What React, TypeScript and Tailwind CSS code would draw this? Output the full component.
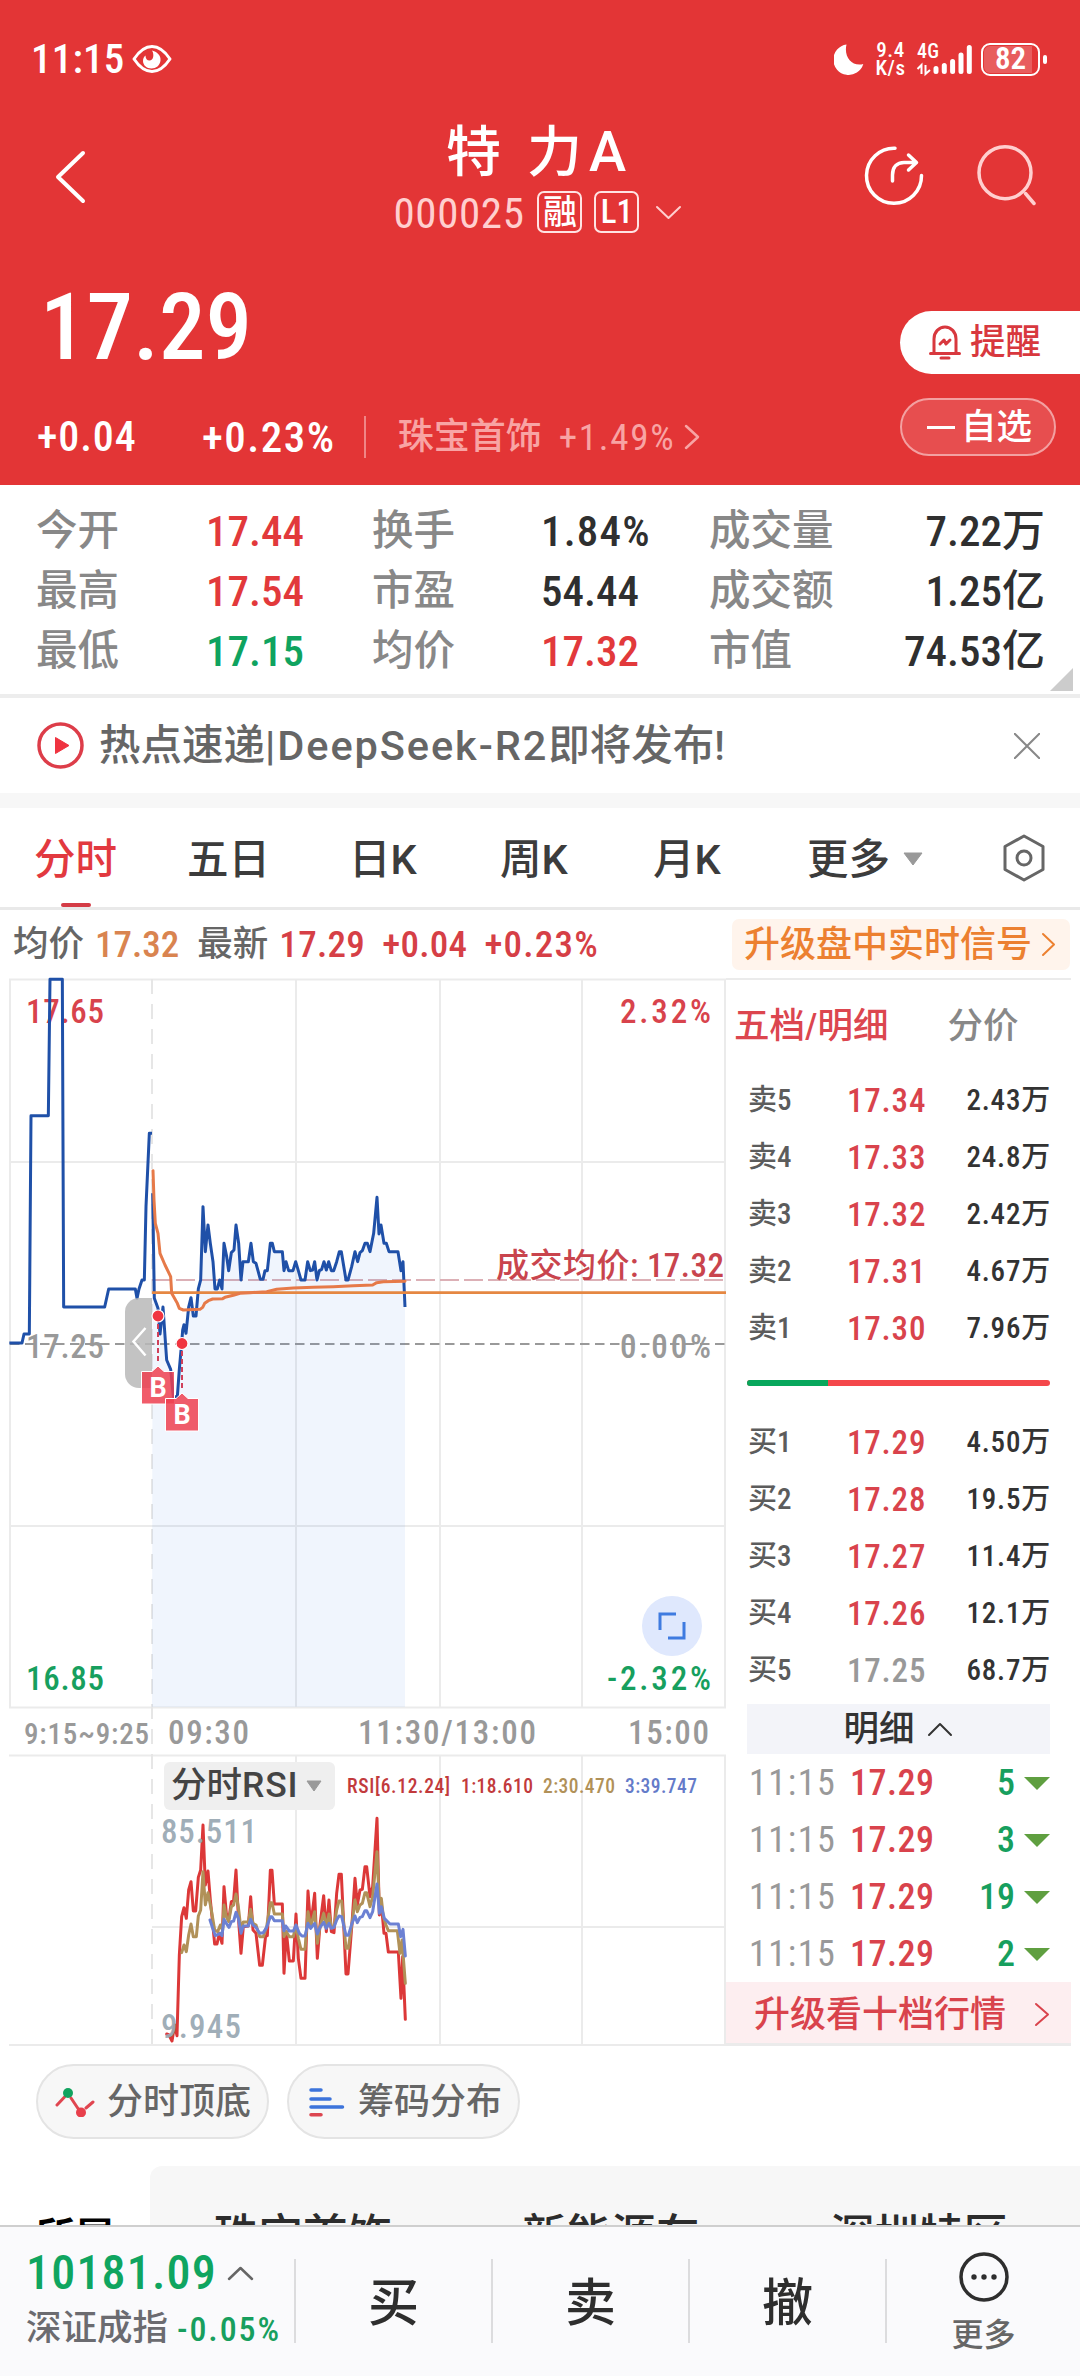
import { clsx } from "clsx";

type Quote = { label: string; price: string; volume: string; flat?: boolean };

const stats = [
  { label: "今开", value: "17.44", color: "text-[#e2393b]" },
  { label: "换手", value: "1.84%", color: "text-[#2f2f2f]" },
  { label: "成交量", value: "7.22万", color: "text-[#2f2f2f]" },
  { label: "最高", value: "17.54", color: "text-[#e2393b]" },
  { label: "市盈", value: "54.44", color: "text-[#2f2f2f]" },
  { label: "成交额", value: "1.25亿", color: "text-[#2f2f2f]" },
  { label: "最低", value: "17.15", color: "text-[#0fa35f]" },
  { label: "均价", value: "17.32", color: "text-[#e2393b]" },
  { label: "市值", value: "74.53亿", color: "text-[#2f2f2f]" },
];

const asks: Quote[] = [
  { label: "卖5", price: "17.34", volume: "2.43万" },
  { label: "卖4", price: "17.33", volume: "24.8万" },
  { label: "卖3", price: "17.32", volume: "2.42万" },
  { label: "卖2", price: "17.31", volume: "4.67万" },
  { label: "卖1", price: "17.30", volume: "7.96万" },
];

const bids: Quote[] = [
  { label: "买1", price: "17.29", volume: "4.50万" },
  { label: "买2", price: "17.28", volume: "19.5万" },
  { label: "买3", price: "17.27", volume: "11.4万" },
  { label: "买4", price: "17.26", volume: "12.1万" },
  { label: "买5", price: "17.25", volume: "68.7万", flat: true },
];

const trades = [
  { time: "11:15", price: "17.29", count: 5 },
  { time: "11:15", price: "17.29", count: 3 },
  { time: "11:15", price: "17.29", count: 19 },
  { time: "11:15", price: "17.29", count: 2 },
];

// Chart series, in thirds of a pixel
const auctionLine =
  "28,1149 66,1149 72,1122 88,1122 93,467 145,467 150,58 187,58 191,1041 314,1041 326,987 406,987 411,1015 417,987 426,960 433,960 438,740 448,520 456,520";
const priceLine =
  "458,700 463,1015 474,1045 480,1122 489,1041 500,1200 512,1228 520,1310 532,1310 538,1228 545,1149 548,1110 552,1094 558,1120 566,1041 573,1013 580,1068 588,1068 595,987 602,960 609,740 616,875 624,795 631,850 639,905 645,987 652,987 659,960 666,987 672,850 680,890 686,932 694,878 702,870 708,795 716,850 723,960 729,905 745,905 753,850 760,905 768,910 781,958 789,958 795,932 802,932 811,850 817,850 823,875 847,875 852,932 858,905 866,932 879,932 887,905 895,932 903,960 915,960 923,905 931,932 938,930 944,905 951,960 958,932 965,928 972,905 979,930 986,905 994,932 1001,932 1010,905 1018,875 1024,875 1038,960 1044,960 1055,920 1065,875 1073,905 1080,878 1087,872 1095,850 1102,850 1110,875 1121,820 1131,712 1137,822 1143,795 1152,850 1159,850 1167,875 1194,875 1203,932 1209,905 1215,1041";
const averageLine =
  "459,632 462,720 466,790 474,820 480,880 495,915 512,950 515,1000 532,1030 538,1045 550,1050 600,1048 608,1042 614,1030 625,1022 638,1017 668,1016 675,1012 700,1006 720,1000 750,998 800,995 830,988 880,984 940,982 1000,980 1060,977 1118,975 1130,968 1150,965 1215,964";
const rsi6 =
  "50,732 57,735 66,753 74,705 81,737 88,495 95,380 102,353 109,385 116,300 123,275 130,363 137,363 145,262 152,240 159,105 166,285 174,243 181,330 188,400 194,462 201,462 208,430 216,460 222,290 229,370 237,385 244,335 251,330 258,240 265,380 273,490 280,410 295,408 302,320 309,420 318,430 329,526 337,526 347,437 352,437 361,241 366,241 373,342 397,342 402,550 409,425 418,513 430,513 438,372 445,505 453,565 465,565 474,303 482,410 494,310 502,505 510,405 521,317 529,425 537,330 544,425 552,428 560,310 567,253 574,253 588,552 594,552 606,400 615,265 622,345 630,300 637,298 645,230 650,230 660,320 668,290 681,85 688,375 694,340 702,430 708,430 715,486 745,486 753,625 758,500 766,688";
const rsi12 =
  "95,488 102,465 109,485 116,435 123,402 130,440 139,440 145,378 152,360 159,245 166,345 174,308 184,360 194,420 203,425 211,405 218,420 222,345 229,380 236,395 244,350 251,345 258,312 265,350 273,420 280,396 295,396 302,358 309,400 318,405 329,440 340,440 350,410 361,338 366,338 373,372 397,372 402,440 409,425 418,440 430,440 438,405 445,445 453,478 465,478 474,365 482,410 494,365 502,460 510,410 521,370 529,410 537,372 544,410 552,412 560,360 567,333 575,333 588,475 595,475 606,400 615,330 622,365 630,345 637,340 645,308 650,308 660,350 668,320 681,185 688,345 694,325 700,380 708,405 715,422 742,422 750,490 756,450 766,580";
const rsi24 =
  "180,390 188,415 196,437 211,430 216,437 222,388 229,400 237,412 244,395 251,393 258,367 265,385 273,430 280,408 295,408 302,388 309,405 318,412 329,430 340,428 350,412 361,380 366,380 373,392 397,392 402,422 407,408 418,423 430,423 438,405 448,430 456,438 465,438 474,400 482,415 494,400 502,432 510,412 521,397 529,415 537,400 544,415 552,412 560,390 567,378 575,380 588,436 595,436 606,400 615,378 622,398 630,382 637,380 645,362 650,362 660,383 668,365 681,282 688,370 694,350 703,385 720,402 745,402 752,440 759,418 766,498";

function Chevron({
  dir,
  w,
  h,
  className,
  stroke = 2.5,
}: {
  dir: "left" | "right" | "up" | "down";
  w: number;
  h: number;
  className?: string;
  stroke?: number;
}) {
  const points = {
    left: `${w},0 0,${h / 2} ${w},${h}`,
    right: `0,0 ${w},${h / 2} 0,${h}`,
    up: `0,${h} ${w / 2},0 ${w},${h}`,
    down: `0,0 ${w / 2},${h} ${w},0`,
  }[dir];
  return (
    <svg
      width={w}
      height={h}
      className={clsx("shrink-0 overflow-visible", className)}
      fill="none"
      stroke="currentColor"
      strokeWidth={stroke}
      strokeLinecap="round"
      strokeLinejoin="round"
    >
      <polyline points={points} />
    </svg>
  );
}

function StatusBar() {
  return (
    <div className="flex h-[118px] items-center pl-[31px] pr-[33px]">
      <span className="pt-[2px] text-[41px] tracking-[0.2px]">11:15</span>
      <svg width="40" height="30" viewBox="0 0 40 30" className="ml-[8px]">
        <path
          d="M2 15C8 6 14 2.500 20 2.500S32 6 38 15C32 24 26 27.500 20 27.500S8 24 2 15Z"
          fill="none"
          stroke="#fff"
          strokeWidth="3"
          strokeLinejoin="round"
        />
        <path d="M20 6.500C26 8 29 12 28.500 16.500C28 21.500 24 24.500 19.500 24.500C14.500 24.500 11 21 11 17C11 14.500 12 12.500 13.500 11.500C13.500 14.500 15 16.500 17.500 16.500C21.500 16.500 22.500 10.500 20 6.500Z" fill="#fff" />
      </svg>
      <div className="ml-auto flex items-center">
        <svg width="30" height="31" viewBox="0 0 30 31">
          <path d="M12.500 0.500A15.300 15.300 0 1 0 29.300 20C18 23 9.500 13 12.500 0.500Z" fill="#fff" />
        </svg>
        <div className="ml-[11px] w-[31px] text-center text-[21px] leading-[18px] tracking-[0.5px]">
          <div>9.4</div>
          <div>K/s</div>
        </div>
        <svg width="56" height="32" viewBox="0 0 56 32" className="ml-[11px] overflow-visible">
          <text x="0" y="15" fontSize="20" fill="#fff" textLength="22">4G</text>
          <path d="M0.500 26L4.500 22V31M8.500 22V31L13 27" fill="none" stroke="#fff" strokeWidth="2" />
          <path
            d="M19 25.500V28.500M27.300 22.500V28.500M35.600 18.500V28.500M44 12V28.500M52.300 4.500V28.500"
            stroke="#fff"
            strokeWidth="5"
            strokeLinecap="round"
          />
        </svg>
        <div className="ml-[8px] flex h-[33px] w-[59px] items-center rounded-[9px] border-2 border-white p-[1px]">
          <div className="flex h-full w-[48px] items-center justify-center rounded-l-[6px] bg-white/20 pl-[5px] text-[31px] font-semibold">
            82
          </div>
        </div>
        <div className="ml-[3px] h-[9px] w-[4px] rounded-full bg-white" />
      </div>
    </div>
  );
}

function Header() {
  return (
    <header className="h-[485px] bg-[#e33536] text-white">
      <StatusBar />
      <div className="grid h-[132px] grid-cols-[58px_239px_1fr_303px]">
        <Chevron dir="left" w={25} h={48} stroke={4} className="col-start-2 mt-[35px]" />
        <div className="flex flex-col items-center pt-[4px]">
          <div className="flex h-[60px] items-center pr-[2px] text-[55px] leading-none">
            <span>特</span>
            <span className="ml-[26px]">力</span>
            <span className="ml-[7px] text-[56px] font-stretch-normal">A</span>
          </div>
          <div className="flex h-[60px] items-center">
            <span className="pt-[2px] text-[43px] font-normal tracking-[0.6px] text-[#ffcfcf]">000025</span>
            <span className="-mt-[1px] ml-[13px] flex h-[42px] w-[45px] items-center justify-center rounded-[7px] border-2 border-[#ffe3e3] text-[34px] leading-none">
              融
            </span>
            <span className="-mt-[1px] ml-[12px] flex h-[42px] w-[45px] items-center justify-center rounded-[7px] border-2 border-[#ffe3e3] text-[33px] leading-none">
              L1
            </span>
            <Chevron dir="down" w={23} h={11} stroke={2} className="ml-[18px] text-[#ffcfcf]" />
          </div>
        </div>
        <div className="flex pl-[88px] pt-[26px]">
          <svg width="58" height="64" viewBox="865 144 58 64" fill="none" stroke="#fff" strokeWidth="3.500" strokeLinecap="round" strokeLinejoin="round" className="overflow-visible">
            <path d="M895 148.300A27.500 27.500 0 1 0 921.500 175.500" />
            <path d="M892.500 181V175C892.500 167 897 162.500 904 162.500H916M908.500 155L916.500 162.500L908.500 170" />
          </svg>
          <svg width="60" height="64" viewBox="976 144 60 64" fill="none" stroke="#ffcfcf" strokeWidth="3.500" strokeLinecap="round" className="ml-[53px]">
            <circle cx="1005" cy="172.700" r="26" />
            <path d="M1025.500 193.500L1034 203.500" />
          </svg>
        </div>
      </div>
      <div className="flex justify-between">
        <div className="pl-[37px]">
          <div className="flex h-[152px] items-center pl-[3px] pt-[3px] text-[93px] font-medium">17.29</div>
          <div className="flex h-[70px] items-center text-[42px] leading-none">
            <span className="w-[165px] tracking-[0.9px]">+0.04</span>
            <span className="text-[43px] tracking-[1.500px]">+0.23%</span>
            <span className="ml-[28px] h-[42px] w-[2px] bg-[#f08586]" />
            <div className="ml-[32px] flex items-center text-[#f8a4a4]">
              <span className="text-[36px]">珠宝首饰</span>
              <span className="ml-[17px] text-[37px] font-normal tracking-[1.7px]">+1.49%</span>
              <Chevron dir="right" w={12} h={22} className="ml-[11px]" />
            </div>
          </div>
        </div>
        <div className="flex flex-col pt-[61px] text-[35.500px] leading-none">
          <button className="flex h-[63px] w-[180px] items-center rounded-l-full bg-white pl-[29px] text-[#d8383e]">
            <svg width="32" height="36" viewBox="0 0 32 36" fill="none" stroke="#d8383e" strokeWidth="3" strokeLinecap="round" strokeLinejoin="round">
              <path d="M5 28V14C5 7 10 2 16 2S27 7 27 14V28M1.500 28.500H30.500M12 33H20M11 19L15 15L17 19L21 15" />
            </svg>
            <span className="ml-[9px] pt-[1px]">提醒</span>
          </button>
          <button className="mt-[24px] flex h-[58px] w-[156px] items-center rounded-full border-2 border-[#f3a0a1] bg-[#e74e4f] pl-[25px]">
            <span className="h-[3px] w-[28px] bg-white" />
            <span className="ml-[6px] pt-[1px]">自选</span>
          </button>
        </div>
      </div>
    </header>
  );
}

function Stats() {
  return (
    <section className="relative h-[213px] border-b-4 border-[#ededed] pl-[36px] pr-[35px] pt-[16px]">
      <div className="grid grid-cols-[170px_166px_169px_168px_1fr_auto] leading-[60px]">
        {stats.map(({ label, value, color }, i) => (
          <div key={label} className="contents">
            <span className="text-[41.500px] text-[#888]">{label}</span>
            <span
              className={clsx(
                "text-[43px]",
                value.endsWith("%") && "tracking-[1.2px]",
                i % 3 === 2 && "text-right",
                color,
              )}
            >
              {value}
            </span>
          </div>
        ))}
      </div>
      <svg width="23" height="23" className="absolute bottom-[3px] right-[7px]">
        <path d="M23 0V23H0Z" fill="#ccc" />
      </svg>
    </section>
  );
}

function NewsBar() {
  return (
    <section className="flex h-[95px] items-center pl-[37px] pr-[40px] text-[#666]">
      <svg width="47" height="47" viewBox="0 0 47 47">
        <circle cx="23.500" cy="23.500" r="21.500" fill="none" stroke="#dd3d49" strokeWidth="3.500" />
        <path d="M18.500 15.500L32 23.500L18.500 31.500Z" fill="#ef3340" stroke="#ef3340" strokeLinejoin="round" />
      </svg>
      <span className="ml-[15px] flex whitespace-pre pt-[2px] text-[41.500px]">
        热点速递|<span className="ml-[2px] font-stretch-normal tracking-[1.900px]">DeepSeek-R2</span>即将发布!
      </span>
      <svg width="26" height="26" className="ml-auto" stroke="#888" strokeWidth="2">
        <path d="M0 0L26 26M26 0L0 26" />
      </svg>
    </section>
  );
}

function Tabs() {
  return (
    <nav className="relative flex h-[102px] items-center border-b-[3px] border-[#e9e9e9] pl-[34px] text-[41.500px] leading-none text-[#3c3c3c]">
      <span className="w-[153px] pt-[4px] text-[#e2393f]">分时</span>
      <span className="w-[162px] pt-[4px]">五日</span>
      <span className="w-[151px] pt-[4px]">
        日<span className="font-stretch-normal">K</span>
      </span>
      <span className="w-[153px] pt-[4px]">
        周<span className="font-stretch-normal">K</span>
      </span>
      <span className="w-[154px] pt-[4px]">
        月<span className="font-stretch-normal">K</span>
      </span>
      <span className="pt-[4px]">更多</span>
      <svg width="22" height="14" className="ml-[12px] mt-[2px]">
        <path d="M2 1H20L11 13Z" fill="#999" stroke="#999" strokeLinejoin="round" />
      </svg>
      <svg width="44" height="48" viewBox="0 0 44 48" fill="none" stroke="#666" strokeWidth="3" strokeLinejoin="round" className="ml-[78px]">
        <path d="M22 2L41 12.500V35.500L22 46L3 35.500V12.500Z" />
        <circle cx="22" cy="24" r="7" />
      </svg>
      <span className="absolute bottom-0 left-[61px] h-[4px] w-[30px] rounded-full bg-[#d43c46]" />
    </nav>
  );
}

function PriceSummary() {
  return (
    <div className="flex h-[68px] items-center pl-[13px] pr-[10px] pt-[1px] text-[35.500px] leading-none text-[#666]">
      <span>均价</span>
      <span className="ml-[11px] text-[37px] text-[#d98450]">17.32</span>
      <span className="ml-[18px]">最新</span>
      <div className="ml-[11px] flex gap-[17px] text-[37px] tracking-[0.3px] text-[#d63f46]">
        <span>17.29</span>
        <span>+0.04</span>
        <span className="tracking-[1.200px]">+0.23%</span>
      </div>
      <button className="ml-auto flex h-[51px] w-[338px] items-center rounded-[7px] bg-[#fff4ec] pl-[12px] text-[36px] text-[#ec8030]">
        升级盘中实时信号
        <Chevron dir="right" w={11} h={21} stroke={2} className="ml-[11px]" />
      </button>
    </div>
  );
}

function BuyTag({ x, y }: { x: number; y: number }) {
  return (
    <g>
      <path
        d={`M${x - 16.5} ${y + 5.5}H${x - 6}L${x} ${y}L${x + 6} ${y + 5.5}H${x + 16.5}V${y + 38}H${x - 16.5}Z`}
        fill="#ee3f50"
        fillOpacity="0.850"
        stroke="#fff"
        strokeWidth="1"
      />
      <text x={x} y={y + 31} fontSize="27" fontWeight="700" fill="#fff" textAnchor="middle" className="font-stretch-normal">
        B
      </text>
    </g>
  );
}

function Charts() {
  return (
    <div className="relative h-[1068px] w-[726px]">
      <svg width="726" height="1070" viewBox="0 978 726 1070" fontSize="33" className="overflow-visible">
        <path
          d="M9 979.500H726M10 1162H725M10 1526H725M9 1707.500H726M9 1755.500H726M152 1927H725M9 2045H726M10 979V1708M296 979V1708M440 979V1708M582 979V1708M725 979V1708M296 1756V2045M440 1756V2045M582 1756V2045M725 1756V2045"
          stroke="#ebebeb"
          strokeWidth="2"
        />
        <path d="M152 979V2045" stroke="#e6e6e6" strokeWidth="2" strokeDasharray="15 10" />
        <path d="M10 1344H725" stroke="#999" strokeWidth="2" strokeDasharray="9.500 5.500" />
        <path d="M152 1280H725" stroke="#dcb0b6" strokeWidth="2" strokeDasharray="19 5" />

        <text x="26" y="1023" fill="#d8434c" textLength="78">17.65</text>
        <text x="620" y="1023" fill="#d8434c" textLength="91">2.32%</text>
        <text x="26" y="1357.500" fill="#999" textLength="78">17.25</text>
        <text x="620" y="1357.500" fill="#999" textLength="91">0.00%</text>
        <text x="26" y="1690" fill="#179f5e" textLength="78">16.85</text>
        <text x="607" y="1690" fill="#179f5e" textLength="104">-2.32%</text>

        <g transform="translate(0 960) scale(0.33333)" fill="none" strokeWidth="9" strokeLinejoin="round">
          <polygon points={`456,2241 ${priceLine} 1215,2241`} fill="#3f7be0" fillOpacity="0.080" />
          <polyline points={auctionLine} stroke="#1f50a8" />
          <polyline points={priceLine} stroke="#1f50a8" />
          <path d="M456 998H2178" stroke="#e58742" strokeWidth="8" />
          <polyline points={averageLine} stroke="#e67a49" strokeWidth="9" strokeLinecap="round" />
        </g>
        <text x="496" y="1277" fill="#c9444d" textLength="228">成交均价: 17.32</text>

        <path d="M152 1298H139A14 14 0 0 0 125 1312V1374A14 14 0 0 0 139 1388H152Z" fill="#b8b8b8" fillOpacity="0.850" />
        <path d="M145.500 1328L133.500 1341.500L145.500 1355.500" fill="none" stroke="#fff" strokeWidth="2.500" />

        <g stroke="#d0405a" strokeWidth="2" strokeDasharray="5 3">
          <path d="M158 1316V1364" />
          <path d="M182 1343V1390" />
        </g>
        <BuyTag x={158} y={1366} />
        <BuyTag x={182} y={1393} />
        <circle cx="158" cy="1316" r="6" fill="#f03540" stroke="#fff" strokeWidth="1.200" />
        <circle cx="182" cy="1343.500" r="6" fill="#f03540" stroke="#fff" strokeWidth="1.200" />

        <circle cx="672" cy="1626" r="30" fill="#dfe8fd" />
        <path d="M676 1614H660V1630M684 1622V1638H668" fill="none" stroke="#3f7be0" strokeWidth="3" />

        <g fill="#999">
          <text x="24" y="1743.500" fontSize="29" textLength="125">9:15~9:25</text>
          <text x="168" y="1744" textLength="81">09:30</text>
          <text x="358" y="1744" textLength="178">11:30/13:00</text>
          <text x="628" y="1744" textLength="81">15:00</text>
        </g>

        <g fontSize="19.500">
          <text x="347" y="1793" fill="#c23a3c" textLength="103">RSI[6.12.24]</text>
          <text x="461" y="1793" fill="#c23a3c" textLength="72">1:18.610</text>
          <text x="543" y="1793" fill="#b19158" textLength="72">2:30.470</text>
          <text x="625" y="1793" fill="#647bc9" textLength="72">3:39.747</text>
        </g>
        <g transform="translate(150 1790) scale(0.33333)" fill="none" strokeWidth="9" strokeLinejoin="round" strokeLinecap="round">
          <polyline points={rsi6} stroke="#dc3838" />
          <polyline points={rsi12} stroke="#b19158" />
          <polyline points={rsi24} stroke="#6c81d3" />
        </g>
        <g fill="#9aa9b4" fillOpacity="0.950">
          <text x="161" y="1843" textLength="96">85.511</text>
          <text x="161" y="2038" textLength="80">9.945</text>
        </g>
      </svg>
      <button className="absolute left-[164px] top-[784px] flex h-[48px] w-[171px] items-center rounded-[6px] bg-[#efefef] pl-[7px] text-[35.500px] leading-none text-[#444]">
        分时<span className="font-stretch-normal tracking-[0.800px]">RSI</span>
        <svg width="17" height="12" className="ml-[8px]">
          <path d="M1 1H15L8 11Z" fill="#999" stroke="#999" strokeLinejoin="round" />
        </svg>
      </button>
    </div>
  );
}

function QuoteRow({ label, price, volume, flat }: Quote) {
  return (
    <div className="grid h-[57px] grid-cols-[99px_1fr_auto] items-center pt-[1px] text-[29px] leading-none">
      <span className="text-[#5c5c5c]">{label}</span>
      <span className={clsx("text-[33px] tracking-[0.8px]", flat ? "text-[#999]" : "text-[#d9434c]")}>{price}</span>
      <span className="tracking-[0.8px] text-[#333]">{volume}</span>
    </div>
  );
}

function OrderBook() {
  return (
    <aside className="flex w-[345px] flex-col border-t-2 border-[#ebebeb]">
      <div className="flex h-[91px] items-center pl-[8px] pt-[2px] text-[35.500px] leading-none">
        <span className="text-[#dc464f]">五档/明细</span>
        <span className="ml-[59px] text-[#888]">分价</span>
      </div>
      <div className="pl-[22px] pr-[20px]">
        {asks.map((q) => (
          <QuoteRow key={q.label} {...q} />
        ))}
      </div>
      <div className="mx-[21px] mb-[27px] mt-[24px] flex h-[6px] shrink-0 overflow-hidden rounded-full bg-[#f4474b]">
        <div className="w-[81px] bg-[#07a75c]" />
      </div>
      <div className="pl-[22px] pr-[20px]">
        {bids.map((q) => (
          <QuoteRow key={q.label} {...q} />
        ))}
      </div>
      <button className="mx-[21px] mt-[6px] flex h-[50px] items-center justify-center bg-[#f3f4f9] pt-[1px] text-[35.500px] leading-none text-[#333]">
        明细
        <Chevron dir="up" w={22} h={11} stroke={2} className="ml-[14px] mr-[3px]" />
      </button>
      <div className="pl-[23px] pr-[21px]">
        {trades.map((t, i) => (
          <div key={i} className="flex h-[57px] items-center pt-[1px] text-[36px] leading-none">
            <span className="w-[101px] font-normal tracking-[1.6px] text-[#999]">{t.time}</span>
            <span className="tracking-[0.5px] text-[#d9434c]">{t.price}</span>
            <span className="ml-auto text-[#179f5e]">{t.count}</span>
            <svg width="26" height="13" className="ml-[9px]">
              <path d="M0 0H26L13 13Z" fill="#5f9f40" />
            </svg>
          </div>
        ))}
      </div>
      <button className="mt-auto flex h-[61px] items-center bg-[#fdeef0] pl-[28px] pt-[4px] text-[36px] leading-none text-[#d9434c]">
        升级看十档行情
        <Chevron dir="right" w={12} h={21} stroke={2} className="ml-[30px]" />
      </button>
      <div className="h-[3px] bg-[#ebebeb]" />
    </aside>
  );
}

function Tools() {
  const pill =
    "flex h-[75px] w-[233px] items-center rounded-full border-2 border-[#e4e4e4] bg-[#f7f7f7] text-[36px] leading-none text-[#666]";
  return (
    <div className="flex h-[120px] gap-[18px] pl-[36px] pt-[18px]">
      <button className={pill}>
        <svg width="40" height="30" viewBox="55 2086 40 30" fill="none" stroke="#e04650" strokeWidth="3" className="ml-[17px]">
          <path d="M57 2104L65 2095.500M71 2097L79 2109M86 2107L93 2101" strokeLinecap="round" />
          <circle cx="68" cy="2092" r="5" fill="#12a35f" stroke="none" />
          <circle cx="81" cy="2111.500" r="5" fill="#e8404c" stroke="none" />
        </svg>
        <span className="ml-[12px]">分时顶底</span>
      </button>
      <button className={pill}>
        <svg width="36" height="30" viewBox="309 2086 36 30" strokeWidth="3.500" strokeLinecap="round" className="ml-[20px]">
          <path d="M311 2089H321M311 2098H330M311 2106H342.500" stroke="#3d74db" />
          <path d="M311 2113.800H321" stroke="#dc4650" />
        </svg>
        <span className="ml-[13px]">筹码分布</span>
      </button>
    </div>
  );
}

function Sectors() {
  return (
    <div className="flex h-[59px] overflow-hidden text-black">
      <div className="w-[150px] shrink-0 pl-[36px] pt-[52px] text-[39px] font-bold leading-none">所属</div>
      <div className="flex h-[200px] flex-1 rounded-tl-[12px] bg-[#f7f7f7] pl-[64px] pt-[48px] text-[44.500px] leading-none text-[#2c2c2c]">
        <span className="w-[308px]">珠宝首饰</span>
        <span className="w-[308px]">新能源车</span>
        <span>深圳特区</span>
      </div>
    </div>
  );
}

function BottomBar() {
  return (
    <footer className="flex h-[151px] border-t-2 border-[#cfcfcf] bg-[#fafafc]">
      <div className="flex w-[294px] flex-col whitespace-nowrap pl-[26px] pt-[18px] leading-none">
        <div className="flex h-[54px] items-center pt-[2px] text-[48px] tracking-[1.200px] text-[#0fa560]">
          10181.09
          <Chevron dir="up" w={23} h={11} stroke={2.5} className="ml-[12px] text-[#666]" />
        </div>
        <div className="mt-[2px] flex h-[54px] items-center pt-[2px] text-[35.500px] text-[#6b6b70]">
          深证成指
          <span className="ml-[9px] text-[34px] tracking-[1.900px] text-[#179f5e]">-0.05%</span>
        </div>
      </div>
      {["买", "卖", "撤"].map((label) => (
        <div key={label} className="flex w-[197px] items-center">
          <div className="-mt-[1px] h-[84px] w-[2px] bg-[#dcdcde]" />
          <span className="flex-1 pt-[4px] text-center text-[51px] leading-none text-[#2e2e2e]">{label}</span>
        </div>
      ))}
      <div className="flex flex-1 items-center">
        <div className="-mt-[1px] h-[84px] w-[2px] bg-[#dcdcde]" />
        <div className="flex flex-1 flex-col items-center">
          <svg width="50" height="50" viewBox="0 0 50 50">
            <circle cx="25" cy="25" r="23" fill="none" stroke="#2e2e2e" strokeWidth="3.500" />
            <g fill="#2e2e2e">
              <circle cx="15" cy="25" r="2.700" />
              <circle cx="25" cy="25" r="2.700" />
              <circle cx="35" cy="25" r="2.700" />
            </g>
          </svg>
          <span className="mt-[17px] text-[32px] leading-none text-[#666]">更多</span>
        </div>
      </div>
    </footer>
  );
}

export default function App() {
  return (
    <div className="h-[2376px] w-[1080px] overflow-hidden bg-white font-[family-name:Roboto,'Noto_Sans_CJK_SC',sans-serif] font-medium font-stretch-condensed">
      <Header />
      <Stats />
      <NewsBar />
      <div className="h-[15px] bg-[#f7f7f7]" />
      <Tabs />
      <PriceSummary />
      <div className="flex">
        <Charts />
        <OrderBook />
      </div>
      <Tools />
      <Sectors />
      <BottomBar />
    </div>
  );
}
